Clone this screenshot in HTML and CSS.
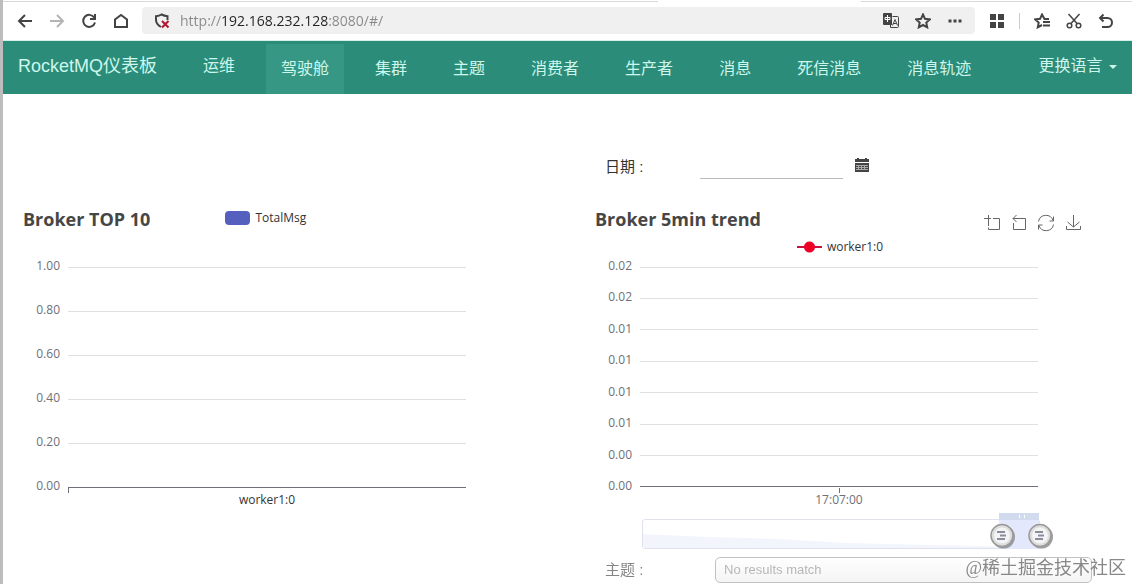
FILE: index.html
```html
<!DOCTYPE html>
<html lang="zh-CN">
<head>
  <meta charset="UTF-8">
  <meta name="viewport" content="width=device-width, initial-scale=1">
  <title>RocketMQ仪表板</title>
  <link rel="stylesheet" href="styles.css">
</head>
<body>
  <!-- browser bar -->
  <div class="tabline"><span class="tab-active"></span></div>
  <div class="browser">
    <div class="browser-nav">
      <button type="button" aria-label="Back"><svg viewBox="0 0 16 16"><path d="M15 8H2M8 2L2 8l6 6"/></svg></button>
      <button type="button" class="off" aria-label="Forward"><svg viewBox="0 0 16 16"><path d="M1 8h13M8 2l6 6-6 6"/></svg></button>
      <button type="button" aria-label="Reload"><svg viewBox="0 0 16 16"><path d="M13.2 4.5A6 6 0 1 0 14 9.500M14 1v5H9"/></svg></button>
      <button type="button" aria-label="Home"><svg viewBox="0 0 16 16"><path d="M2 14V6.500L8 2l6 4.500V14z"/></svg></button>
    </div>
    <div class="address">
      <svg class="shield" viewBox="0 0 16 16"><path d="M7 14C3.500 12 2 10 2 7V3.200C4.500 3 6 2.500 7.500 1.500 9.500 2.500 11 3 13.500 3.200V7"/><path class="cross" d="M8 8l6.500 6.500M14.500 8L8 14.500"/></svg>
      <input type="text" class="url" aria-label="Address" value="http://192.168.232.128:8080/#/">
      <button type="button" aria-label="Translate"><svg viewBox="0 0 16 16"><path class="fill" d="M1 0h7q1 0 1 1v11H1q-1 0-1-1V1q0-1 1-1z"/><path class="zh" d="M2 4.500h5v2H2zM4.500 2v7"/><path class="thin" d="M9.500 3.500h5q1 0 1 1v9q0 1-1 1h-7v-3M9.500 12.500l2.500-6 2.500 6M10.200 10.500h3.500"/></svg></button>
      <button type="button" aria-label="Favourite"><svg viewBox="0 0 16 16"><path d="M8 1.500l2 4.300 4.800.6-3.500 3.200.9 4.700L8 12l-4.200 2.300.9-4.700L1.200 6.400 6 5.800z"/></svg></button>
      <button type="button" aria-label="More"><svg viewBox="0 0 16 16"><path class="fill" d="M1.500 6.500h3v3h-3zM6.500 6.500h3v3h-3zM11.500 6.500h3v3h-3z"/></svg></button>
    </div>
    <div class="browser-tools">
      <button type="button" aria-label="Extensions"><svg viewBox="0 0 16 16"><path class="fill" d="M1 1h6v6H1zM9 1h6v6H9zM1 9h6v6H1zM9 9h6v6H9z"/></svg></button>
      <span class="divider"></span>
      <button type="button" aria-label="Bookmarks"><svg viewBox="0 0 16 16"><path d="M15 6h-4.500L8 1.500 6 5.800l-4.800.6 3.500 3.200-.9 4.700L8 12M9 9h7M9 12.500h7"/></svg></button>
      <button type="button" aria-label="Screenshot"><svg class="scissors" viewBox="0 0 16 16"><path d="M2.500 1L11 10.500M13.500 1L5 10.500"/><circle cx="3.500" cy="12.500" r="2.300"/><circle cx="12.500" cy="12.500" r="2.300"/></svg></button>
      <button type="button" aria-label="Undo"><svg viewBox="0 0 16 16"><path d="M5.500 1.500L2 5l3.500 3.500M2 5h7.500a4.500 4.500 0 0 1 0 9H4"/></svg></button>
    </div>
  </div>

  <nav class="navbar">
    <a class="brand" href="#/">RocketMQ仪表板</a>
    <ul class="menu">
      <li class="ops"><a href="#/ops">运维</a></li>
      <li class="active"><a href="#/">驾驶舱</a></li>
      <li><a href="#/cluster">集群</a></li>
      <li><a href="#/topic">主题</a></li>
      <li><a href="#/consumer">消费者</a></li>
      <li><a href="#/producer">生产者</a></li>
      <li><a href="#/message">消息</a></li>
      <li><a href="#/dlqMessage">死信消息</a></li>
      <li><a href="#/messageTrace">消息轨迹</a></li>
    </ul>
    <button type="button" class="lang">更换语言 <span class="caret"></span></button>
  </nav>

  <main class="dashboard">
    <div class="date-row">
      <label for="date">日期 :</label>
      <input type="text" id="date">
      <svg class="calendar" viewBox="0 0 14 14"><path d="M0 1h2V0h2v1h6V0h2v1h2v3H0zM0 5h14v9H0z"/><path class="cells" d="M1 7.500h12M1 9.500h12M1 11.500h12M3.500 7v5M6.500 7v5M9.500 7v5"/></svg>
    </div>

    <section class="chart bar-chart">
      <div class="chart-head">
        <h2>Broker TOP 10</h2>
        <div class="legend"><span class="swatch"></span>TotalMsg</div>
      </div>
      <div class="plot">
        <div class="tick"><span>1.00</span></div>
        <div class="tick"><span>0.80</span></div>
        <div class="tick"><span>0.60</span></div>
        <div class="tick"><span>0.40</span></div>
        <div class="tick"><span>0.20</span></div>
        <div class="tick axis"><span>0.00</span></div>
      </div>
      <div class="x-label">worker1:0</div>
    </section>

    <section class="chart line-chart">
      <div class="chart-head">
        <h2>Broker 5min trend</h2>
        <div class="toolbox">
          <button type="button" aria-label="Zoom"><svg viewBox="0 0 18 18"><path d="M5.500 1v11M1 4.500h7M10 4.500h6.500v11h-11v-2"/></svg></button>
          <button type="button" aria-label="Zoom reset"><svg viewBox="0 0 18 18"><path d="M6.500 1L3 4.500 6.500 8M3 4.500h12.500v11h-12V9"/></svg></button>
          <button type="button" aria-label="Restore"><svg viewBox="0 0 18 18"><path d="M1.500 7.500a7.500 7.500 0 0 1 14.500-1M16.500 2.500V7H12.500M16.500 10.500a7.500 7.500 0 0 1-14.500 1M1.500 15.500V11H5.500"/></svg></button>
          <button type="button" aria-label="Save"><svg viewBox="0 0 18 18"><path d="M9.500 1v12M3.500 8l6 5 6-5M2.500 12v3.500h14V12"/></svg></button>
        </div>
      </div>
      <div class="legend"><span class="marker"></span>worker1:0</div>
      <div class="plot">
        <div class="tick"><span>0.02</span></div>
        <div class="tick"><span>0.02</span></div>
        <div class="tick"><span>0.01</span></div>
        <div class="tick"><span>0.01</span></div>
        <div class="tick"><span>0.01</span></div>
        <div class="tick"><span>0.01</span></div>
        <div class="tick"><span>0.00</span></div>
        <div class="tick axis"><span>0.00</span></div>
      </div>
      <div class="x-label">17:07:00</div>
      <div class="data-zoom">
        <svg class="shadow" viewBox="0 0 398 30" preserveAspectRatio="none"><path d="M0 15L60 18 130 20 210 25 300 27 398 29V30H0z"/></svg>
        <span class="window"></span>
        <input type="range" aria-label="Range start" min="0" max="200" value="181">
        <input type="range" aria-label="Range end" min="0" max="200" value="200">
      </div>
    </section>

    <div class="topic-row">
      <label for="topic">主题 :</label>
      <select id="topic">
        <option>No results match</option>
      </select>
    </div>
  </main>

  <div class="watermark">@稀土掘金技术社区</div>
</body>
</html>
```
FILE: styles.css
```css
* {
  box-sizing: border-box;
}
body {
  min-height: 100vh;
  margin: 0;
  border-left: 3px solid #bdbdbd;
  background: #fff;
  color: #333;
  font-family: "Open Sans", "Noto Sans CJK SC", sans-serif;
  font-size: 12px;
  line-height: 16px;
}
button {
  padding: 0;
  border: 0;
  background: none;
  font: inherit;
  color: inherit;
}

/* browser bar */
.tabline {
  display: flex;
  height: 3px;
  background: #d9d9d9;
  border-top: 1px solid #fff;
  border-bottom: 1px solid #fff;
}
.tab-active {
  width: 18%;
  margin-left: 58%;
  background: #fff;
}
.browser {
  display: flex;
  align-items: center;
  height: 38px;
  padding: 0 18px 2px 14px;
  border-bottom: 1px solid #d5efe9;
}
.browser svg {
  display: block;
  width: 16px;
  height: 16px;
  fill: none;
  stroke: #444;
  stroke-width: 2;
}
.browser svg .fill {
  fill: #444;
  stroke: none;
}
.browser svg .zh {
  stroke: #fff;
  stroke-width: 1;
}
.browser svg .thin {
  stroke-width: 1;
}
.browser svg .cross {
  stroke: #b3142d;
}
.browser svg.scissors {
  stroke-width: 1.5;
}
.browser .off svg {
  stroke: #b5b5b5;
}
.browser-nav {
  display: flex;
  gap: 16px;
}
.address {
  display: flex;
  flex: 1;
  align-items: center;
  gap: 16px;
  height: 27px;
  margin: 0 14px 0 13px;
  padding: 0 12px;
  border-radius: 4px;
  background: #f0f0f0;
}
.url {
  flex: 1;
  min-width: 0;
  margin-left: -6px;
  padding: 0;
  border: 0;
  outline: 0;
  /* host is darker than the scheme and the port */
  background: linear-gradient(90deg, #888 42px, #222 42px, #222 148px, #888 148px);
  -webkit-background-clip: text;
  background-clip: text;
  -webkit-text-fill-color: transparent;
  font: 14px/20px "Open Sans", sans-serif;
}
.browser-tools {
  display: flex;
  align-items: center;
  gap: 16px;
}
.divider {
  width: 1px;
  height: 16px;
  margin: 0 -2px;
  background: #ccc;
}

/* navbar */
.navbar {
  display: flex;
  align-items: flex-start;
  height: 53px;
  background: #2b8c79;
  color: #cdf6ec;
  font-family: "Liberation Sans", "Noto Sans CJK SC", sans-serif;
  font-size: 16px;
  line-height: 20px;
}
.navbar a {
  color: inherit;
  text-decoration: none;
}
.brand {
  padding: 15px;
  font-size: 18px;
  white-space: nowrap;
}
.menu {
  display: flex;
  gap: 16px;
  margin: 3px 0 0 16px;
  padding: 0;
  list-style: none;
}
.menu a {
  display: block;
  padding: 15px;
  white-space: nowrap;
}
.menu .ops a {
  padding-top: 12px;
}
.menu .active {
  background: #369884;
}
.lang {
  margin-left: auto;
  padding: 15px;
  white-space: nowrap;
}
.caret {
  display: inline-block;
  margin-left: 2px;
  border: 4px solid transparent;
  border-top-color: #cdf6ec;
  border-bottom: 0;
  vertical-align: middle;
}

/* dashboard */
.dashboard {
  display: grid;
  grid-template-columns: 572fr 557fr;
  grid-template-areas:
    ". date"
    "bar line"
    ". topic";
  padding-top: 56px;
}
.date-row,
.topic-row {
  display: flex;
  align-items: center;
  padding-left: 30px;
  font-family: "Liberation Sans", "Noto Sans CJK SC", sans-serif;
  font-size: 15px;
}
.date-row {
  grid-area: date;
  height: 34px;
}
.date-row label {
  width: 95px;
}
.date-row input {
  width: 143px;
  height: 24px;
  padding: 0;
  border: 0;
  border-bottom: 1px solid #bbb;
  background: none;
  outline: 0;
}
.calendar {
  width: 14px;
  height: 14px;
  margin: 0 0 4px 12px;
  fill: #444;
}
.calendar .cells {
  fill: none;
  stroke: #aaa;
  stroke-width: 1;
}
.chart {
  width: 100%;
  max-width: 515px;
  padding: 23px 0 0 15px;
}
.bar-chart {
  grid-area: bar;
}
.line-chart {
  grid-area: line;
}
.chart-head {
  display: flex;
  height: 24px;
  padding-left: 5px;
}
.chart h2 {
  margin: 0;
  font-size: 18px;
  line-height: 24px;
  color: #464646;
}
.legend {
  display: flex;
  align-items: center;
  justify-content: center;
  gap: 5px;
  height: 22px;
}
.bar-chart .legend {
  margin-left: 75px;
}
.bar-chart .plot {
  margin-top: 28px;
}
.line-chart .legend {
  margin-top: 6px;
  padding-bottom: 2px;
}
.swatch {
  width: 25px;
  height: 14px;
  border-radius: 4px;
  background: #5560be;
}
.marker {
  width: 25px;
  height: 12px;
  background: radial-gradient(circle, #ee0026 5px, transparent 6px), linear-gradient(#c4133f, #c4133f) center / 100% 2px no-repeat;
}
.toolbox {
  display: flex;
  gap: 9px;
  margin: 7px 8px 0 auto;
}
.toolbox svg {
  display: block;
  width: 18px;
  height: 18px;
  fill: none;
  stroke: #666;
  stroke-width: 1;
}
.plot {
  display: flex;
  flex-direction: column;
  justify-content: space-between;
  height: 236px;
  margin-right: 52px;
  color: #6e7079;
}
.tick {
  display: flex;
  align-items: center;
  gap: 8px;
  height: 16px;
}
.tick span {
  width: 42px;
  padding-bottom: 2px;
  text-align: right;
}
.tick::after {
  content: "";
  flex: 1;
  height: 1px;
  background: #e0e0e0;
}
.tick.axis::after {
  background: #6e7079;
}
.x-label {
  position: relative;
  margin: -4px 52px 0 50px;
  padding-top: 1px;
  text-align: center;
  color: #333;
}
.line-chart .x-label {
  color: #6e7079;
}
.x-label::before {
  content: "";
  position: absolute;
  top: -3px;
  left: 0;
  width: 1px;
  height: 5px;
  background: #6e7079;
}
.line-chart .x-label::before {
  left: 50%;
}

/* zoom slider under the trend chart */
.data-zoom {
  position: relative;
  height: 30px;
  margin: 11px 50px 0 52px;
  border: 1px solid #dfe2ee;
  border-radius: 3px;
}
.shadow {
  display: block;
  width: 100%;
  height: 28px;
  fill: #f3f5fd;
}
.window {
  position: absolute;
  top: -7px;
  right: 0;
  bottom: -1px;
  width: 10%;
  border-top: 7px solid #d2dbee;
  background: #e4e8fc;
}
.window::before {
  content: "";
  position: absolute;
  top: -5px;
  left: 50%;
  width: 4px;
  height: 3px;
  border: solid #fff;
  border-width: 0 1px;
}
.data-zoom input {
  position: absolute;
  top: 2px;
  left: -13px;
  width: calc(100% + 28px);
  height: 28px;
  margin: 0;
  appearance: none;
  background: none;
  pointer-events: none;
}
.data-zoom input::-webkit-slider-thumb {
  appearance: none;
  width: 28px;
  height: 28px;
  pointer-events: auto;
  background: url("data:image/svg+xml,%3Csvg xmlns='http://www.w3.org/2000/svg' viewBox='0 0 28 28'%3E%3Ccircle cx='15.500' cy='15' r='11.500' fill='%23888' opacity='.8'/%3E%3Ccircle cx='14' cy='13.500' r='11' fill='%23ddd' stroke='%23999' stroke-width='1.500'/%3E%3Ccircle cx='14' cy='13.500' r='8' fill='%23f4f4f4'/%3E%3Cpath d='M9 10h8M12 13.500h6M9 17h8' stroke='%238a8d9c' stroke-width='2'/%3E%3C/svg%3E");
}

/* topic filter */
.topic-row {
  grid-area: topic;
  height: 26px;
  margin-top: 8px;
  opacity: 0.6;
}
.topic-row label {
  width: 110px;
}
.topic-row select {
  width: 377px;
  height: 26px;
  padding: 0 8px;
  border: 1px solid #999;
  border-radius: 5px;
  appearance: none;
  background: linear-gradient(#fff, #eee);
  font: 13px/24px "Liberation Sans", sans-serif;
  color: #888;
}
.watermark {
  position: fixed;
  right: 6px;
  bottom: 4px;
  font: 18px/24px "Liberation Serif", "Noto Sans CJK SC", sans-serif;
  color: #888;
}
```
